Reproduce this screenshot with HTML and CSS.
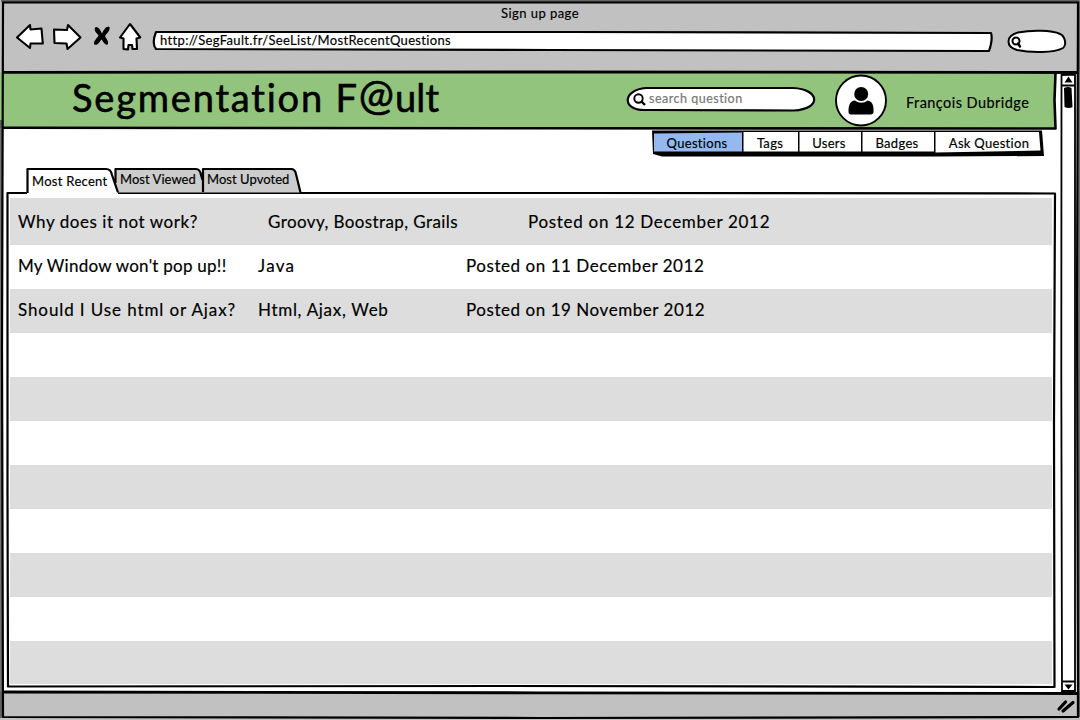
FILE: index.html
```html
<!DOCTYPE html>
<html lang="en">
<head>
<meta charset="utf-8">
<title>Sign up page</title>
<link rel="stylesheet" href="styles.css">
</head>
<body>
<div class="window">
  <header class="chrome">
    <div class="chrome-title">Sign up page</div>
    <div class="toolbar">
      <svg class="nav-icons" width="134" height="34" viewBox="12 20 134 34">
        <g fill="#fff" stroke="#000" stroke-width="2.1" stroke-linejoin="round" stroke-linecap="round">
          <path d="M17 37.500 L30 25 L30.500 29.500 L41.500 28.500 L42.800 43.500 L30.500 43.500 L30 48 Z"/>
          <path d="M54 29.500 L67 30 L68 25 L80.500 37.500 L67.500 49 L66.500 43.500 L54.500 43 Z"/>
          <path d="M120 37.500 L130 24 L140.300 37.500 L136.500 38.500 L137 49 L132.500 49 L132 45 L128.500 45 L128 49.500 L123.500 49 L123.500 38.500 Z"/>
        </g>
        <path d="M95.500 27 C99 26.500 101 31.500 102 33.500 C104 29.500 106 25.500 109.500 27 C110.500 31 106 34 105 36 C106 39 109 41 107.800 44.500 C104.500 45.500 103 41 101.500 39.500 C99.500 41.500 98 46 94.200 44.500 C93 41 97.500 38 98.500 35.500 C97 33 93 30.500 95.500 27 Z"/>
      </svg>
      <div class="address">
        <svg class="sketch" viewBox="0 0 842 24" preserveAspectRatio="none"><path d="M5 3 L420 3 L840 4 C842 10 840 16 838 22 L400 21 L5 20 C1 15 3 8 5 3 Z"/></svg>
        <span>http://SegFault.fr/SeeList/MostRecentQuestions</span>
      </div>
      <svg class="browser-search" width="62" height="28" viewBox="0 0 62 28">
        <path d="M12 5.500 C25 3 46 3 54 7 C59 9 61 18 57 21 C48 26 25 26 11 23 C0 20 -1 9 12 5.500 Z" fill="#fff" stroke="#000" stroke-width="2"/>
        <circle cx="10" cy="14" r="3.500" fill="none" stroke="#000" stroke-width="2"/><path d="M12 16.500 L14 19.500" stroke="#000" stroke-width="2.400" stroke-linecap="round"/>
      </svg>
    </div>
  </header>

  <div class="viewport">
    <main class="page">
      <div class="banner">
        <h1 class="brand">Segmentation F<span class="at">@</span><span class="ult">ult</span></h1>
        <div class="search">
          <svg class="sketch" viewBox="0 0 188 25"><path d="M19 1 L166 1 C193 2 195 22 167 23.500 L17 23 C-5 23 -5 3 19 1 Z"/></svg>
          <svg class="lens" width="13" height="13" viewBox="0 0 13 13"><circle cx="5.500" cy="5.500" r="4.200" fill="none" stroke="#000" stroke-width="1.900"/><path d="M8.500 8.500 L12 12" stroke="#000" stroke-width="2.400"/></svg>
          <span>search question</span>
        </div>
        <svg class="avatar" width="53" height="54" viewBox="0 0 53 54">
          <ellipse cx="26" cy="26.500" rx="25" ry="25" fill="#fff" stroke="#000" stroke-width="1.900"/>
          <path d="M13.500 38 C13.500 31 15 27 20 26.500 C24 29.500 29 29.500 32.500 26.500 C37.500 27 39 32 38.500 38 C38.500 39.500 37.500 40.500 35.500 40.500 L17 40.500 C15 40.500 13.500 40 13.500 38 Z"/>
          <circle cx="26.200" cy="20" r="7"/>
        </svg>
        <span class="user">François Dubridge</span>
      </div>
      <nav class="menu">
        <svg class="sketch" viewBox="0 0 392 28">
          <path class="shade" d="M0 0.500 L390 0.500 L392 26 L285 26.500 L10 26.500 L1 24 Z"/>
          <path class="fill-blue" d="M2 3.500 L90 2.500 L90 21.500 L2 21.500 Z"/>
          <path class="fill-white" d="M91.500 2 H146 V21.500 H91.500 Z M147.500 2 H209 V21.500 H147.500 Z M210.500 2 H282 V21.500 H210.500 Z M283.500 2 L387 2 L388.500 20.500 L283.500 22.500 Z"/>
        </svg>
        <a>Questions</a><a>Tags</a><a>Users</a><a>Badges</a><a>Ask Question</a>
      </nav>
      <section class="board">
        <div class="tabs">
          <svg class="sketch" viewBox="0 0 276 28">
            <path class="fill-tab" d="M176.500 24.500 V1 H265 Q269 1 270 5 L274 24.500 Z"/>
            <path class="fill-tab" d="M89 24.500 V1 H170 Q174 1 175 7 L176.500 13 V24.500 Z"/>
            <path class="fill-white" d="M1 28 V1 H80 Q85 1 87 8 L92 24.500 L92 28 Z"/>
            <path class="line" d="M1.500 25 V1 H80 Q85 1 86 7 L92 24.500 M89.500 15 V1 H170 Q174 1 175 7 L176.500 12 M177 24 V1 H265 Q269 1 270 6 L274.500 24.500"/>
          </svg>
          <span class="tab tab-a">Most Recent</span><span class="tab tab-b">Most Viewed</span><span class="tab tab-c">Most Upvoted</span>
        </div>
        <div class="panel">
          <svg class="sketch" viewBox="0 0 1050 496" preserveAspectRatio="none"><path class="line" d="M21.500 1 H1.500 V300 L2 494.500 L500 494 L1048.500 495 L1048 230 L1049 1.500 L580 1 L112 1"/></svg>
          <div class="rows">
            <div class="row first"><span class="q1">Why does it not work?</span><span class="t1">Groovy, Boostrap, Grails</span><span class="d1">Posted on 12 December 2012</span></div>
            <div class="row"><span class="q2">My Window won't pop up!!</span><span class="t2">Java</span><span>Posted on 11 December 2012</span></div>
            <div class="row"><span class="q3">Should I Use html or Ajax?</span><span class="t3">Html, Ajax, Web</span><span>Posted on 19 November 2012</span></div>
            <div class="row"></div><div class="row"></div><div class="row"></div><div class="row"></div>
            <div class="row"></div><div class="row"></div><div class="row"></div><div class="row last"></div>
          </div>
        </div>
      </section>
    </main>
    <svg class="scrollbar" width="20" height="620" viewBox="0 0 20 620">
      <g fill="none" stroke="#000" stroke-width="1.800"><path d="M4.500 3 L18 2.500 V619 H5 L4.300 300 Z M4 13.500 H18 M5 609.500 H18"/></g>
      <path d="M7.500 10.500 L11.500 4.500 L15.500 10.500 Z M7.500 612.500 L15.500 612.500 L11.500 617.500 Z"/>
      <path d="M7 16 Q11 14 14.500 16 L15.500 35 Q12 37 7.500 35 Z"/>
    </svg>
  </div>
  <footer class="status">
    <svg width="20" height="16" viewBox="0 0 20 16"><path d="M3 11 L9.500 4 M7 13 L17 4.500" fill="none" stroke="#000" stroke-width="3.200" stroke-linecap="round"/></svg>
  </footer>
  <svg class="window-frame" width="1080" height="720" viewBox="0 0 1080 720">
    <g fill="none" stroke="#000" stroke-linejoin="round">
      <path stroke="#444" stroke-width="1.500" d="M1 1 H1079 V717 M1 120 V718"/>
      <path stroke-width="2.200" d="M3 2.500 L1078 2.500 L1077 300 L1078 717 L540 718 L3 717 L2 350 Z"/>
      <path stroke-width="2.800" d="M3 72.300 L540 72 L1077 72.500 M3 692 L540 692.800 L1077 693.500"/>
      <path stroke-width="2.600" d="M3 127.800 L540 128.300 L1055.500 128.500 L1054.500 100 L1055.500 73"/>
    </g>
  </svg>
</div>
</body>
</html>
```

FILE: styles.css
```css
* { box-sizing: border-box; }
body { margin: 0; background: #fff; font-family: Lato, "Open Sans", sans-serif; color: #000; overflow: hidden; font-variant-ligatures: none; }
.window { position: relative; width: 1080px; height: 720px; display: flex; flex-direction: column; }
.window-frame { position: absolute; inset: 0; pointer-events: none; }
.sketch { position: absolute; left: 0; top: 0; width: 100%; height: 100%; overflow: visible; z-index: 0; }
.sketch path { fill: #fff; stroke: #000; stroke-width: 2.2; stroke-linejoin: round; }
.sketch .shade { fill: #000; stroke: none; }
.sketch .fill-blue { fill: #93b9f0; stroke: none; }
.sketch .fill-white { fill: #fff; stroke: none; }
.sketch .fill-tab { fill: #ccc; stroke: none; }
.sketch .line { fill: none; stroke-width: 2.2; }
span, a { position: relative; white-space: nowrap; -webkit-text-stroke: .18px currentColor; }

.chrome { height: 72px; background: #c1c1c1; padding-top: 4px; }
.chrome-title { height: 16px; line-height: 19px; font-size: 13px; text-align: center; letter-spacing: .45px; -webkit-text-stroke: .18px #000; }
.toolbar { display: flex; align-items: flex-start; padding-left: 12px; }
.address { position: relative; width: 842px; height: 24px; margin: 9px 11px 0 5px; padding-left: 9px; font-size: 13px; line-height: 22px; letter-spacing: .34px; }
.browser-search { margin-top: 7px; margin-left: 2px; }

.viewport { height: 620px; display: flex; }
.page { width: 1057px; }
.banner { height: 56px; background: #93c47d; display: flex; margin-right: 2px; }
.brand { margin: 0; padding-left: 72px; width: 626px; font-size: 38px; line-height: 51px; font-weight: 400; letter-spacing: 1.8px; white-space: nowrap; -webkit-text-stroke: .6px #000; }
.at { font-size: 42px; line-height: 1; top: -2px; letter-spacing: 1px; -webkit-text-stroke: .6px #000; }
.ult { letter-spacing: .2px; -webkit-text-stroke: .6px #000; }
.search { position: relative; width: 188px; height: 25px; margin: 15px 20px 0 1px; padding-left: 6px; display: flex; align-items: center; gap: 3px; color: #777; font-size: 12.5px; }
.search span { top: -1px; letter-spacing: .5px; }
.lens { position: relative; }
.avatar { margin-top: 2px; flex: none; }
.user { margin-left: 18px; line-height: 62px; font-size: 14.5px; letter-spacing: .45px; }

.menu { position: relative; width: 392px; height: 28px; margin: 2px 0 0 652px; display: grid; grid-template-columns: 90px 56px 62px 74px 110px; text-align: center; font-size: 13px; line-height: 27px; letter-spacing: .3px; }
.board { margin: 10px 0 0 6px; }
.tabs { position: relative; height: 25px; width: 276px; margin-left: 20px; display: grid; grid-template-columns: 88px 87px 101px; font-size: 13px; line-height: 23px; }
.tabs .sketch { height: 28px; z-index: 2; }
.tab { z-index: 3; padding-left: 6px; letter-spacing: .04px; }
.tab-a { line-height: 27px; letter-spacing: .3px; }
.panel { position: relative; width: 1050px; height: 496px; margin-top: -1px; padding: 6px 3px; }
.rows { position: relative; left: 1px; width: 1042px; }
.row { height: 44px; display: grid; grid-template-columns: 240px 208px 1fr; padding-left: 8px; font-size: 17px; line-height: 41px; letter-spacing: .55px; }
.row:nth-child(odd) { background: #ddd; }
.first { height: 47px; grid-template-columns: 250px 260px 1fr; line-height: 47px; }
.last { height: 43px; }
.t1 { letter-spacing: .4px; }
.d1 { letter-spacing: .7px; }
.q2 { letter-spacing: .25px; }
.t2 { letter-spacing: 1.3px; }
.q3 { letter-spacing: .9px; }
.t3 { letter-spacing: .7px; }
.status { height: 28px; background: #c1c1c1; display: flex; justify-content: flex-end; align-items: center; padding-right: 4px; }
```
